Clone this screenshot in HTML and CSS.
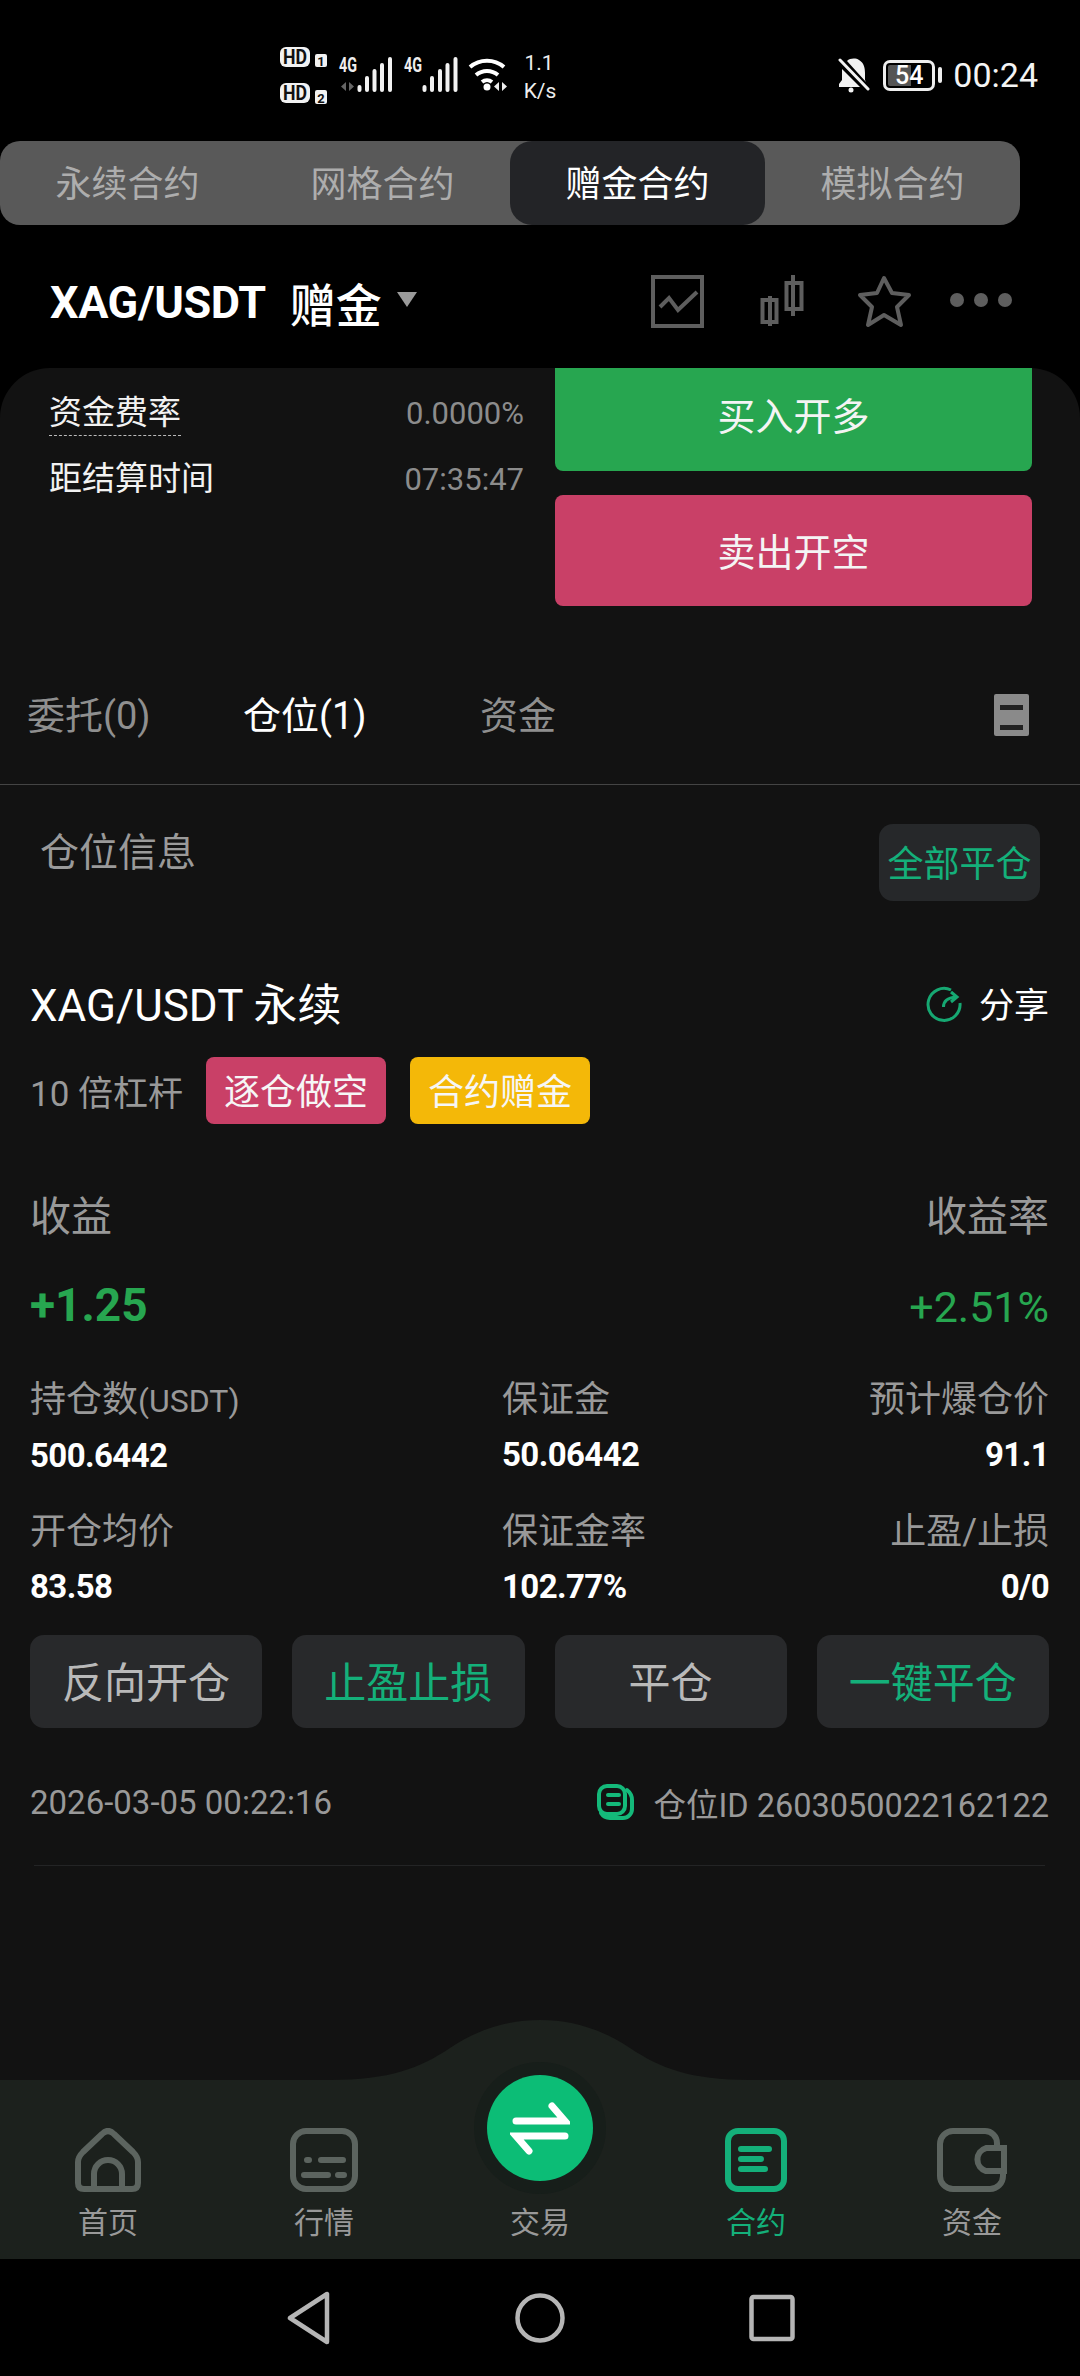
FILE: index.html
```html
<!DOCTYPE html>
<html lang="zh-CN">
<head>
    <meta charset="UTF-8">
    <meta name="viewport" content="width=device-width, initial-scale=1.0">
    <title>赠金合约</title>
    <link rel="stylesheet" href="styles.css">
</head>
<body>
    <div class="status-bar">
        <svg class="status-left" viewBox="280 40 285 70" width="285" height="70">
            <g class="sb-chip">
                <rect x="280" y="47" width="30" height="20" rx="6"/>
                <rect x="280" y="83" width="30" height="20" rx="6"/>
                <rect x="315" y="54" width="12" height="13" rx="2"/>
                <rect x="315" y="90" width="12" height="14" rx="2"/>
            </g>
            <g class="sb-chip-text">
                <text x="283" y="64" textLength="24" lengthAdjust="spacingAndGlyphs">HD</text>
                <text x="283" y="100" textLength="24" lengthAdjust="spacingAndGlyphs">HD</text>
                <text x="321" y="65.500" text-anchor="middle" class="small">1</text>
                <text x="321" y="102.500" text-anchor="middle" class="small">2</text>
            </g>
            <text x="339" y="72" class="sb-net" textLength="18" lengthAdjust="spacingAndGlyphs">4G</text>
            <text x="404" y="72" class="sb-net" textLength="18" lengthAdjust="spacingAndGlyphs">4G</text>
            <path class="sb-arrows dim" d="M346 82v9l-5-4.500zM349 82v9l5-4.500z"/>
            <path class="sb-bars" d="M359.500 87v3M367 78v12M374.500 71v19M382 65v25M390 59v31"/>
            <path class="sb-bars" d="M424.500 87v3M432 78v12M440 71v19M447.500 65v25M455.500 59v31"/>
            <g class="sb-wifi">
                <path d="M470 67a26 26 0 0 1 34 0"/>
                <path d="M476 75a17 17 0 0 1 22 0"/>
                <path d="M482 82a8 8 0 0 1 10 0"/>
            </g>
            <circle cx="487" cy="87" r="3.500" fill="#fff"/>
            <path class="sb-arrows" d="M499 82v9l-5-4.500zM502 82v9l5-4.500z"/>
            <text x="539" y="70" text-anchor="middle" class="sb-speed">1.1</text>
            <text x="540" y="98" text-anchor="middle" class="sb-speed">K/s</text>
        </svg>
        <div class="status-right">
            <svg viewBox="0 0 34 36" width="34" height="36">
                <path fill="#f2f2f2" d="M11 4C14 1 20 1 23 3C28 6 29 11 29 16V23L30 25Z"/>
                <path fill="#f2f2f2" d="M6 12L24 30H3V27L6 23Z"/>
                <path stroke="#f2f2f2" stroke-width="3" stroke-linecap="round" d="M4 3L32 32"/>
                <circle cx="15" cy="33" r="2.500" fill="#f2f2f2"/>
            </svg>
            <span class="battery">54</span>
            <span class="clock">00:24</span>
        </div>
    </div>

    <div class="segment">
        <div class="segment-item">永续合约</div>
        <div class="segment-item">网格合约</div>
        <div class="segment-item active">赠金合约</div>
        <div class="segment-item">模拟合约</div>
    </div>

    <div class="pair-bar">
        <span class="pair-name">XAG/USDT</span>
        <span class="pair-kind">赠金</span>
        <span class="pair-caret"></span>
        <svg class="pair-tools" viewBox="650 270 365 60" width="365" height="60">
            <rect x="653" y="277" width="49" height="49"/>
            <path d="M660 307l9-9 9 12 19-18"/>
            <path d="M770 296v30M762.500 300h14v22h-14zM793 275v41M786.500 283h15v26h-15z"/>
            <path stroke-linejoin="round" d="M884 278l8 15 17 2-12 12 4 18-17-10-16 10 4-18-12-12 17-2z"/>
            <circle cx="957" cy="300" r="7" class="dot"/>
            <circle cx="981" cy="300" r="7" class="dot"/>
            <circle cx="1005" cy="300" r="7" class="dot"/>
        </svg>
    </div>

    <div class="panel">
        <div class="trade-box">
            <div class="funding">
                <div class="funding-row">
                    <span class="funding-label dashed">资金费率</span>
                    <span class="funding-value">0.0000%</span>
                </div>
                <div class="funding-row">
                    <span class="funding-label">距结算时间</span>
                    <span class="funding-value">07:35:47</span>
                </div>
            </div>
            <div class="trade-btns">
                <div class="trade-btn buy">买入开多</div>
                <div class="trade-btn sell">卖出开空</div>
            </div>
        </div>

        <div class="order-tabs">
            <span class="order-tab first">委托(0)</span>
            <span class="order-tab active">仓位(1)</span>
            <span class="order-tab">资金</span>
            <span class="order-menu"></span>
        </div>

        <div class="position-head">
            <span class="position-title">仓位信息</span>
            <span class="close-all">全部平仓</span>
        </div>

        <div class="position">
            <div class="position-name">
                <span class="symbol">XAG/USDT 永续</span>
                <span class="share">
                    <svg viewBox="0 0 36 36" width="36" height="36">
                        <path d="M25 4A16 16 0 1 0 34 17"/>
                        <path d="M17.500 21Q17.500 12 30 11M25 6L31 11L25 16"/>
                    </svg>
                    分享
                </span>
            </div>
            <div class="tags">
                <span class="leverage">10 倍杠杆</span>
                <span class="tag short">逐仓做空</span>
                <span class="tag bonus">合约赠金</span>
            </div>
            <div class="pnl-labels">
                <span>收益</span>
                <span>收益率</span>
            </div>
            <div class="pnl-values">
                <span class="pnl-amount">+1.25</span>
                <span class="pnl-rate">+2.51%</span>
            </div>
            <div class="details">
                <div class="detail"><span>持仓数<small>(USDT)</small></span><b>500.6442</b></div>
                <div class="detail"><span>保证金</span><b>50.06442</b></div>
                <div class="detail right"><span>预计爆仓价</span><b>91.1</b></div>
                <div class="detail"><span>开仓均价</span><b>83.58</b></div>
                <div class="detail"><span>保证金率</span><b>102.77%</b></div>
                <div class="detail right"><span>止盈/止损</span><b>0/0</b></div>
            </div>
            <div class="actions">
                <div class="action">反向开仓</div>
                <div class="action green">止盈止损</div>
                <div class="action">平仓</div>
                <div class="action green">一键平仓</div>
            </div>
            <div class="position-meta">
                <span>2026-03-05 00:22:16</span>
                <span class="position-id">
                    <svg viewBox="0 0 38 38" width="38" height="38">
                        <rect x="3" y="3" width="26" height="28" rx="8"/>
                        <path d="M31 7Q36 11 36 17V26A9 9 0 0 1 27 35H14Q8 35 5 30"/>
                        <path d="M12 12h11M12 21h11"/>
                    </svg>
                    仓位ID 2603050022162122
                </span>
            </div>
            <div class="position-rule"></div>
        </div>

        <div class="tabbar">
            <svg class="tabbar-hump" viewBox="0 0 1080 60" width="1080" height="60">
                <path d="M0 60H330C390 60 420 48 450 28C480 8 510 0 540 0C570 0 600 8 630 28C660 48 690 60 750 60H1080Z"/>
            </svg>
            <div class="tabbar-items">
                <div class="tabbar-item">
                    <svg viewBox="0 0 66 64" width="66" height="64">
                        <path d="M27 6Q33 0 39 6L58 24Q63 29 63 34V55Q63 61 57 61H9Q3 61 3 55V34Q3 29 8 24Z"/>
                        <path d="M19 61V46A14 14 0 0 1 47 46V61"/>
                    </svg>
                    <span>首页</span>
                </div>
                <div class="tabbar-item">
                    <svg viewBox="0 0 68 64" width="68" height="64">
                        <rect x="3" y="3" width="62" height="58" rx="13"/>
                        <path d="M17 32h2M31 32h22M14 47h24M48 47h6"/>
                    </svg>
                    <span>行情</span>
                </div>
                <div class="tabbar-item trade">
                    <div class="trade-halo">
                        <div class="trade-circle">
                            <svg viewBox="0 0 60 60" width="60" height="60">
                                <path d="M6 23H55L42 8"/>
                                <path d="M55 38H6L19 53"/>
                            </svg>
                        </div>
                    </div>
                    <span>交易</span>
                </div>
                <div class="tabbar-item active">
                    <svg viewBox="0 0 62 64" width="62" height="64">
                        <rect x="3" y="3" width="56" height="58" rx="10"/>
                        <path d="M16 21h28M16 31h20M16 41h24"/>
                    </svg>
                    <span>合约</span>
                </div>
                <div class="tabbar-item">
                    <svg viewBox="0 0 70 64" width="70" height="64">
                        <path d="M60 17V15A12 12 0 0 0 48 3H16A13 13 0 0 0 3 16V48A13 13 0 0 0 16 61H53A13 13 0 0 0 66 48V44"/>
                        <path d="M67 20H49A12 12 0 0 0 49 43H67Z"/>
                    </svg>
                    <span>资金</span>
                </div>
            </div>
        </div>
    </div>

    <div class="nav-bar">
        <svg viewBox="0 0 46 54" width="46" height="54">
            <path d="M41 3V51L4 27Z"/>
        </svg>
        <svg viewBox="0 0 52 52" width="52" height="52">
            <circle cx="26" cy="26" r="22.500"/>
        </svg>
        <svg viewBox="0 0 46 48" width="46" height="48">
            <rect x="2.500" y="3" width="41" height="42" rx="2"/>
        </svg>
    </div>
</body>
</html>
```

FILE: styles.css
```css
* {
    box-sizing: border-box;
}
body {
    margin: 0;
    width: 1080px;
    height: 2376px;
    display: flex;
    flex-direction: column;
    background-color: #000;
    color: #fff;
    font-family: Roboto, "Noto Sans CJK SC", sans-serif;
    overflow: hidden;
}

/* status bar */
.status-bar {
    height: 141px;
    flex-shrink: 0;
    padding: 40px 42px 0 280px;
    display: flex;
    justify-content: space-between;
}
.sb-chip rect {
    fill: #f2f2f2;
}
.sb-chip-text text {
    font-size: 20px;
    font-weight: 700;
    fill: #111;
}
.sb-chip-text text.small {
    font-size: 13px;
}
.sb-net {
    font-size: 20px;
    font-weight: 700;
    fill: #eee;
}
.sb-bars {
    fill: none;
    stroke: #f2f2f2;
    stroke-width: 4;
    stroke-linecap: round;
}
.sb-arrows {
    fill: #eee;
}
.sb-arrows.dim {
    fill: #666;
}
.sb-wifi path {
    fill: none;
    stroke: #fff;
    stroke-width: 4;
}
.sb-speed {
    font-size: 21px;
    fill: #eee;
}
.status-right {
    height: 70px;
    display: flex;
    align-items: center;
}
.battery {
    position: relative;
    width: 52px;
    height: 31px;
    margin-left: 13px;
    border: 3px solid #eee;
    border-radius: 7px;
    background: linear-gradient(90deg, #555 54%, transparent 54%);
    background-clip: content-box;
    padding: 2px;
    font-size: 25px;
    line-height: 21px;
    font-weight: 500;
    text-align: center;
}
.battery::after {
    content: "";
    position: absolute;
    right: -10px;
    top: 4px;
    width: 4px;
    height: 16px;
    background-color: #eee;
    border-radius: 2px;
}
.clock {
    margin-left: 18px;
    font-size: 34px;
    color: #f4f4f4;
}

/* contract type switch */
.segment {
    width: 1020px;
    height: 84px;
    flex-shrink: 0;
    display: flex;
    background-color: #595959;
    border-radius: 20px;
}
.segment-item {
    flex: 1;
    padding-bottom: 5px;
    display: flex;
    align-items: center;
    justify-content: center;
    font-size: 36px;
    color: #adadad;
}
.segment-item.active {
    background-color: #232427;
    border-radius: 22px;
    color: #fff;
}

/* pair header */
.pair-bar {
    height: 143px;
    flex-shrink: 0;
    padding: 6px 65px 0 50px;
    display: flex;
    align-items: center;
}
.pair-name {
    margin-top: 5px;
    font-size: 45px;
    font-weight: 700;
    letter-spacing: -0.4px;
}
.pair-kind {
    margin-top: 5px;
    margin-left: 24px;
    font-size: 46px;
    font-weight: 500;
}
.pair-caret {
    margin: 0 0 1px 15px;
    border-left: 10px solid transparent;
    border-right: 10px solid transparent;
    border-top: 15px solid #9a9a9a;
}
.pair-tools {
    margin-left: auto;
    fill: none;
    stroke: #5e5e5e;
    stroke-width: 4;
}
.pair-tools .dot {
    fill: #5e5e5e;
    stroke: none;
}

/* main panel */
.panel {
    flex: 1;
    min-height: 0;
    display: flex;
    flex-direction: column;
    background-color: #121212;
    border-radius: 50px 50px 0 0;
}
.trade-box {
    height: 238px;
    flex-shrink: 0;
    padding: 0 48px 0 49px;
    display: flex;
    gap: 31px;
}
.funding {
    width: 475px;
    padding-top: 23px;
    display: flex;
    flex-direction: column;
    gap: 22px;
}
.funding-row {
    height: 44px;
    display: flex;
    justify-content: space-between;
    align-items: center;
}
.funding-label {
    font-size: 33px;
    line-height: 44px;
    color: #f2f2f2;
}
.funding-label.dashed {
    border-bottom: 1px dashed #bbb;
}
.funding-value {
    font-size: 31px;
    color: #8c8c8c;
}
.trade-btns {
    flex: 1;
}
.trade-btn {
    display: flex;
    align-items: center;
    justify-content: center;
    font-size: 38px;
    color: #f4f4f4;
    border-radius: 0 0 8px 8px;
}
.trade-btn.buy {
    height: 103px;
    margin-bottom: 24px;
    padding-bottom: 13px;
    background-color: #27a650;
}
.trade-btn.sell {
    height: 111px;
    padding-bottom: 3px;
    background-color: #c94067;
    border-radius: 8px;
}

/* orders / positions tabs */
.order-tabs {
    height: 179px;
    flex-shrink: 0;
    padding: 35px 51px 0 27px;
    display: flex;
    align-items: center;
    border-bottom: 1px solid #444;
    font-size: 38px;
    color: #8f8f8f;
}
.order-tab {
    width: 237px;
}
.order-tab.first {
    width: 216px;
}
.order-tab.active {
    color: #fff;
}
.order-menu {
    position: relative;
    width: 35px;
    height: 42px;
    margin-left: auto;
    margin-top: 5px;
    background-color: #8a8a8a;
    border-radius: 2px;
}
.order-menu::before {
    content: "";
    position: absolute;
    left: 6px;
    right: 6px;
    top: 11px;
    height: 15px;
    border-top: 5px solid #222;
    border-bottom: 5px solid #222;
}

.position-head {
    height: 116px;
    flex-shrink: 0;
    padding: 39px 40px 0;
    display: flex;
    justify-content: space-between;
    align-items: flex-start;
}
.position-title {
    margin-top: 2px;
    font-size: 39px;
    line-height: 54px;
    color: #9a9a9a;
}
.close-all {
    width: 161px;
    height: 77px;
    padding-bottom: 3px;
    display: flex;
    align-items: center;
    justify-content: center;
    background-color: #26282a;
    border-radius: 14px;
    font-size: 36px;
    color: #14b07a;
}

/* position card */
.position {
    padding: 71px 31px 0 30px;
}
.position-name {
    height: 60px;
    display: flex;
    justify-content: space-between;
    align-items: center;
}
.symbol {
    font-size: 44px;
}
.share {
    display: flex;
    align-items: center;
    gap: 17px;
    font-size: 35px;
}
.share svg {
    margin-top: 3px;
    fill: none;
    stroke: #16a872;
    stroke-width: 3;
}
.tags {
    height: 67px;
    margin-top: 25px;
    display: flex;
    align-items: center;
}
.leverage {
    width: 176px;
    font-size: 35px;
    color: #999;
}
.tag {
    width: 180px;
    height: 67px;
    margin-right: 24px;
    padding-bottom: 3px;
    display: flex;
    align-items: center;
    justify-content: center;
    border-radius: 8px;
    font-size: 36px;
    color: #f6f6f6;
}
.tag.short {
    background-color: #c94067;
}
.tag.bonus {
    background-color: #f4b808;
}
.pnl-labels {
    height: 56px;
    margin-top: 61px;
    display: flex;
    justify-content: space-between;
    align-items: center;
    font-size: 41px;
    color: #999;
}
.pnl-values {
    height: 56px;
    margin-top: 36px;
    display: flex;
    justify-content: space-between;
    align-items: center;
    color: #27a650;
}
.pnl-amount {
    font-size: 46px;
    font-weight: 700;
}
.pnl-rate {
    margin-top: 3px;
    font-size: 43px;
}
.details {
    margin-top: 45px;
    display: grid;
    grid-template-columns: 472px 1fr 1fr;
    row-gap: 34px;
}
.detail {
    display: flex;
    flex-direction: column;
    gap: 13px;
}
.detail span {
    font-size: 36px;
    line-height: 44px;
    color: #999;
}
.detail small {
    font-size: 32px;
}
.detail b {
    font-size: 33px;
    line-height: 40px;
    font-weight: 700;
    letter-spacing: -0.6px;
}
.detail.right {
    text-align: right;
}
.actions {
    margin-top: 28px;
    display: grid;
    grid-template-columns: repeat(4, 1fr);
    gap: 30px;
}
.action {
    height: 93px;
    padding-bottom: 5px;
    display: flex;
    align-items: center;
    justify-content: center;
    background-color: #28292b;
    border-radius: 14px;
    font-size: 42px;
    color: #b9b9b9;
}
.action.green {
    color: #14b07a;
}
.position-meta {
    height: 44px;
    margin-top: 52px;
    display: flex;
    justify-content: space-between;
    align-items: center;
    font-size: 33px;
    color: #999;
}
.position-id {
    display: flex;
    align-items: center;
    gap: 20px;
    font-size: 32.500px;
}
.position-id svg {
    fill: none;
    stroke: #14b97a;
    stroke-width: 4;
    stroke-linecap: round;
}
.position-rule {
    margin: 41px 4px 0 4px;
    border-bottom: 1px solid #232425;
}

/* bottom tab bar */
.tabbar {
    margin-top: auto;
}
.tabbar-hump {
    display: block;
    fill: #1c211d;
}
.tabbar-items {
    height: 179px;
    display: grid;
    grid-template-columns: repeat(5, 216px);
    background-color: #1c211d;
}
.tabbar-item {
    padding-top: 48px;
    display: flex;
    flex-direction: column;
    align-items: center;
    font-size: 30px;
    line-height: 40px;
    color: #999;
}
.tabbar-item > svg {
    fill: none;
    stroke: #5c645f;
    stroke-width: 6;
    stroke-linecap: round;
}
.tabbar-item > span {
    margin-top: 11px;
}
.tabbar-item.active {
    color: #14b07a;
}
.tabbar-item.active > svg {
    stroke: #14b07a;
}
.trade-halo {
    width: 132px;
    height: 132px;
    margin-top: -66px;
    display: flex;
    align-items: center;
    justify-content: center;
    border-radius: 50%;
    background-color: #171e1a;
}
.trade-circle {
    width: 106px;
    height: 106px;
    display: flex;
    align-items: center;
    justify-content: center;
    border-radius: 50%;
    background-color: #0cbd76;
}
.trade-circle svg {
    fill: none;
    stroke: #fff;
    stroke-width: 7;
    stroke-linecap: round;
}
.tabbar-item.trade > span {
    margin-top: 9px;
}

/* system navigation */
.nav-bar {
    height: 117px;
    flex-shrink: 0;
    padding-left: 286px;
    display: flex;
    align-items: center;
}
.nav-bar svg {
    fill: none;
    stroke: #b5b5b5;
    stroke-width: 4.500;
    stroke-linejoin: round;
}
.nav-bar svg:nth-child(2) {
    margin: 0 183px 0 182px;
}
```
